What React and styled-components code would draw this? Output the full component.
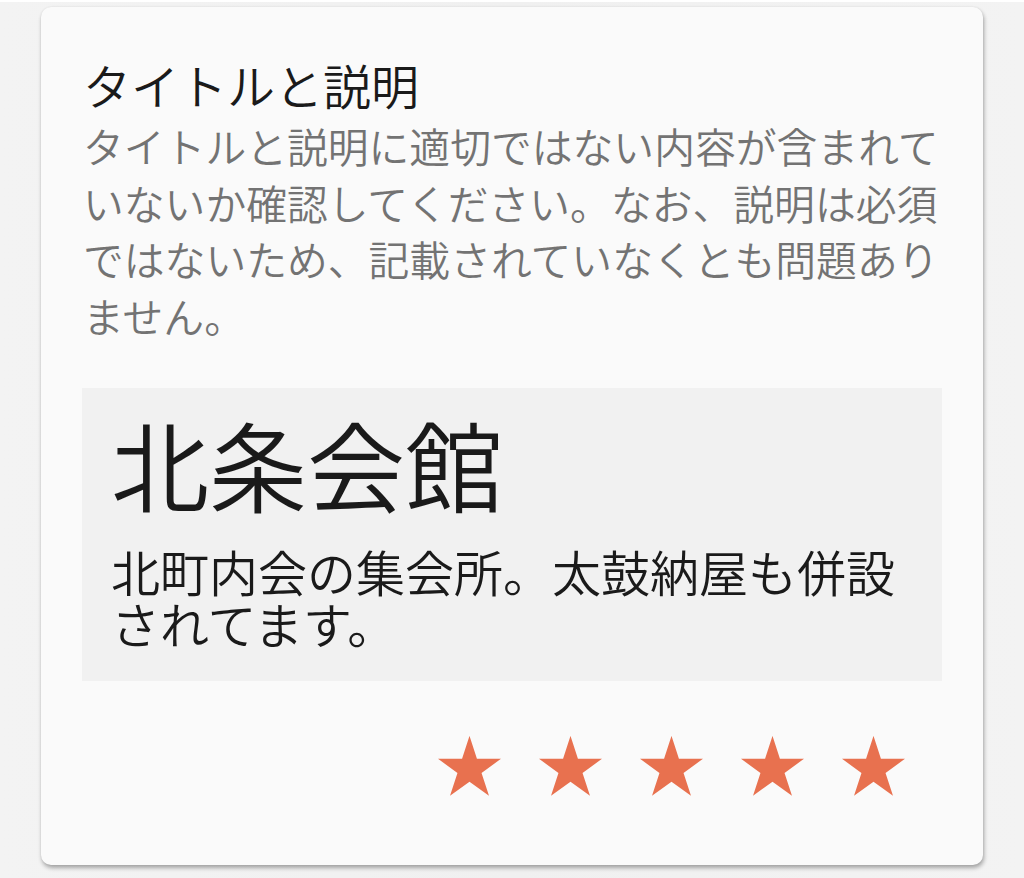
import React from "react";
import styled, { createGlobalStyle } from "styled-components";

const GlobalStyle = createGlobalStyle`
  html, body {
    margin: 0;
    padding: 0;
    background: #f1f1f1;
  }
  body {
    font-family: "Noto Sans CJK JP", "Noto Sans", sans-serif;
  }
`;

const Page = styled.div`
  min-height: 878px;
  box-sizing: border-box;
  border-top: 2px solid #ffffff;
  padding: 5px 41px 12px;
  background: linear-gradient(90deg, #f3f3f3 0%, #f0f0f0 50%, #f3f3f3 100%);
`;

const Card = styled.section`
  background: #fafafa;
  border-radius: 10px;
  box-shadow: 1px 3px 4px rgba(0, 0, 0, 0.32), 0 0 2px rgba(0, 0, 0, 0.08);
  padding: 49px 41px 69px;
  display: flex;
  flex-direction: column;
`;

const Title = styled.h2`
  margin: 0 0 6px;
  font-size: 48px;
  line-height: 56px;
  font-weight: 350;
  color: #1a1a1a;
  padding-left: 1px;
`;

const Description = styled.p`
  margin: 0;
  font-size: 40.8px;
  line-height: 56.5px;
  font-weight: 350;
  color: #737373;
  padding-left: 1px;
`;

const Preview = styled.div`
  margin-top: 44px;
  background: #f1f1f1;
  padding: 20px 28px 32px 29px;
`;

const PreviewTitle = styled.h1`
  margin: 0 0 29px;
  font-size: 98px;
  line-height: 108px;
  font-weight: 350;
  color: #1a1a1a;
`;

const PreviewText = styled.p`
  margin: 0;
  font-size: 49px;
  line-height: 52px;
  font-weight: 350;
  color: #1a1a1a;
`;

const Stars = styled.div`
  margin-top: 55px;
  display: flex;
  justify-content: flex-end;
  gap: 38px;
  padding-right: 37px;
  line-height: 0;
`;

const StarIcon = styled.svg`
  width: 63px;
  height: 60px;
  display: block;
  fill: ${(p) => p.$color};
`;

const starPoints = (() => {
  const cx = 50, cy = 52.4, R = 52.6, r = 52.6 * 0.382;
  const pts = [];
  for (let i = 0; i < 10; i++) {
    const rad = i % 2 === 0 ? R : r;
    const a = (-90 + i * 36) * (Math.PI / 180);
    pts.push(`${(cx + rad * Math.cos(a)).toFixed(2)},${(cy + rad * Math.sin(a)).toFixed(2)}`);
  }
  return pts.join(" ");
})();

const Star = ({ color = "#e8714f" }) => (
  <StarIcon viewBox="0 0 100 95.2" $color={color} aria-hidden="true">
    <polygon points={starPoints} />
  </StarIcon>
);

export default function App() {
  return (
    <>
      <GlobalStyle />
      <Page>
        <Card>
          <Title>タイトルと説明</Title>
          <Description>
            タイトルと説明に適切ではない内容が含まれていないか確認してください。なお、説明は必須ではないため、記載されていなくとも問題ありません。
          </Description>
          <Preview>
            <PreviewTitle>北条会館</PreviewTitle>
            <PreviewText>北町内会の集会所。太鼓納屋も併設されてます。</PreviewText>
          </Preview>
          <Stars>
            {[0, 1, 2, 3, 4].map((i) => (
              <Star key={i} />
            ))}
          </Stars>
        </Card>
      </Page>
    </>
  );
}
